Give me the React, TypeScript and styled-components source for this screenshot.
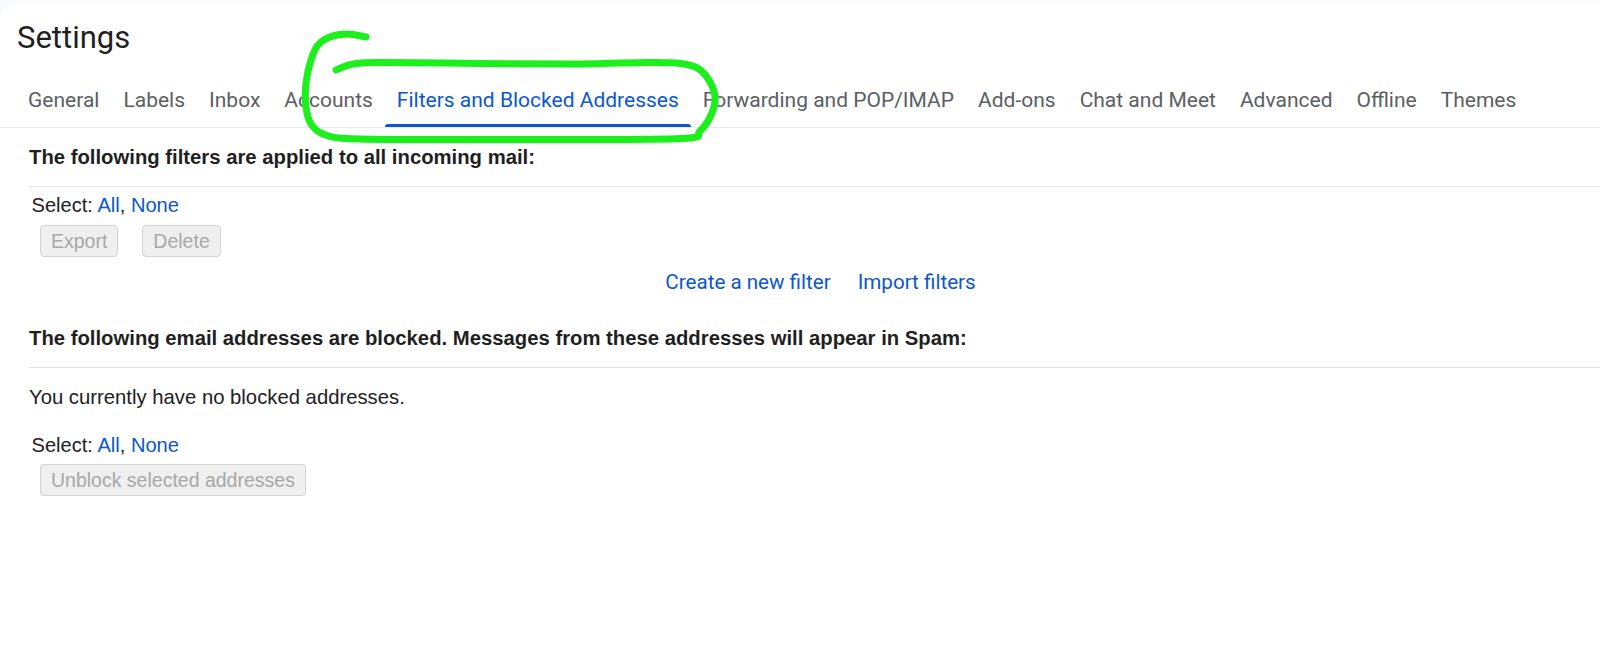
import React from 'react'
import styled, { createGlobalStyle, css } from 'styled-components'

const GlobalStyle = createGlobalStyle`
  html, body {
    margin: 0;
    padding: 0;
    background: #f8fafd;
  }
  body {
    font-family: "Liberation Sans", Arial, sans-serif;
    color: #202124;
  }
  * {
    box-sizing: border-box;
  }
`

const SANS = `Roboto, "Noto Sans", sans-serif`

const Page = styled.div`
  position: relative;
  padding-top: 3px;
  min-height: 671px;
`

const Card = styled.main`
  background: #fff;
  border-top-left-radius: 16px;
  min-height: 668px;
  overflow: hidden;
`

const Title = styled.h1`
  margin: 0 0 21px;
  padding: 15px 0 0 17px;
  font-family: ${SANS};
  font-weight: 400;
  font-size: 31px;
  line-height: 40px;
  color: #1f1f1f;
`

const TabBar = styled.nav`
  display: flex;
  padding-left: 16px;
  border-bottom: 1px solid #e9eaec;
`

const Tab = styled.a<{ $active?: boolean }>`
  position: relative;
  height: 48px;
  padding: 0 12px 6px;
  font-family: ${SANS};
  font-size: 21px;
  line-height: 42px;
  white-space: nowrap;
  color: ${({ $active }) => ($active ? '#0b57d0' : '#5b5e62')};
  cursor: pointer;

  ${({ $active }) =>
    $active &&
    css`
      &::after {
        content: '';
        position: absolute;
        left: 0;
        right: 0;
        bottom: 0;
        height: 3px;
        border-radius: 3px 3px 0 0;
        background: #0b57d0;
      }
    `}
`

const Section = styled.section`
  padding-left: 29px;
`

const SectionHeading = styled.h2<{ $gap: number }>`
  margin: ${({ $gap }) => $gap}px 0 0;
  padding-bottom: 18px;
  border-bottom: 1px solid #e3e3e3;
  font-size: 20.3px;
  line-height: 22px;
  font-weight: 700;
  color: #1f1f1f;
`

const SelectRow = styled.div<{ $gap: number }>`
  margin-top: ${({ $gap }) => $gap}px;
  padding-left: 2.5px;
  font-size: 20.1px;
  line-height: 22px;
  color: #202124;
`

const Link = styled.a`
  color: #0b57d0;
  text-decoration: none;
  cursor: pointer;
`

const ButtonRow = styled.div`
  display: flex;
  gap: 24px;
  margin: 8.5px 0 0 11px;
`

const Button = styled.button`
  height: 32px;
  padding: 0 10px;
  border: 1px solid #d4d4d4;
  border-radius: 4px;
  background: #efefef;
  color: #a8a8a8;
  font-family: "Liberation Sans", Arial, sans-serif;
  font-size: 19.5px;
  line-height: 30px;
`

const LinksRow = styled.div`
  display: flex;
  justify-content: center;
  gap: 27px;
  margin-top: 13px;
  padding-left: 12px;
  font-family: ${SANS};
  font-size: 20.6px;
  line-height: 24px;
`

const EmptyText = styled.p`
  margin: 18px 0 0;
  font-size: 20.3px;
  line-height: 22px;
  color: #202124;
`

const Scribble = styled.svg`
  position: absolute;
  top: 0;
  left: 0;
  pointer-events: none;
`

const TABS = [
  'General',
  'Labels',
  'Inbox',
  'Accounts',
  'Filters and Blocked Addresses',
  'Forwarding and POP/IMAP',
  'Add-ons',
  'Chat and Meet',
  'Advanced',
  'Offline',
  'Themes',
]

// hand-drawn highlight round the active tab
const MARK: [number, number][] = [
  [366, 37], [347, 34], [330, 37], [318, 45], [311, 60], [306, 83], [306, 107],
  [311, 124], [323, 134], [347, 138.5], [413, 139.5], [547, 139.5], [682, 138.5],
  [700, 131], [712, 113], [715, 97], [710, 82], [699, 69], [681, 63.5], [647, 62.5],
  [580, 64], [480, 63.5], [380, 62.5], [353, 64], [336, 70],
]

const smoothPath = (pts: [number, number][]) => {
  let d = `M${pts[0][0]},${pts[0][1]}`
  for (let i = 0; i < pts.length - 1; i++) {
    const p0 = pts[i - 1] || pts[i]
    const p1 = pts[i]
    const p2 = pts[i + 1]
    const p3 = pts[i + 2] || p2
    const c1 = [p1[0] + (p2[0] - p0[0]) / 6, p1[1] + (p2[1] - p0[1]) / 6]
    const c2 = [p2[0] - (p3[0] - p1[0]) / 6, p2[1] - (p3[1] - p1[1]) / 6]
    d += ` C${c1[0]},${c1[1]} ${c2[0]},${c2[1]} ${p2[0]},${p2[1]}`
  }
  return d
}

const SelectLinks: React.FC<{ gap: number }> = ({ gap }) => (
  <SelectRow $gap={gap}>
    Select: <Link>All</Link>, <Link>None</Link>
  </SelectRow>
)

const App: React.FC = () => (
  <Page>
    <GlobalStyle />
    <Card>
      <Title>Settings</Title>
      <TabBar>
        {TABS.map((t) => (
          <Tab key={t} $active={t === 'Filters and Blocked Addresses'}>
            {t}
          </Tab>
        ))}
      </TabBar>

      <Section>
        <SectionHeading $gap={18}>The following filters are applied to all incoming mail:</SectionHeading>
        <SelectLinks gap={7} />
        <ButtonRow>
          <Button disabled>Export</Button>
          <Button disabled>Delete</Button>
        </ButtonRow>
        <LinksRow>
          <Link>Create a new filter</Link>
          <Link>Import filters</Link>
        </LinksRow>

        <SectionHeading $gap={33}>
          The following email addresses are blocked. Messages from these addresses will appear in Spam:
        </SectionHeading>
        <EmptyText>You currently have no blocked addresses.</EmptyText>
        <SelectLinks gap={26} />
        <ButtonRow>
          <Button disabled>Unblock selected addresses</Button>
        </ButtonRow>
      </Section>
    </Card>
    <Scribble width="1600" height="671" viewBox="0 0 1600 671" aria-hidden>
      <path
        d={smoothPath(MARK)}
        fill="none"
        stroke="#1cf01c"
        strokeWidth={7}
        strokeLinecap="round"
        strokeLinejoin="round"
      />
    </Scribble>
  </Page>
)

export default App
